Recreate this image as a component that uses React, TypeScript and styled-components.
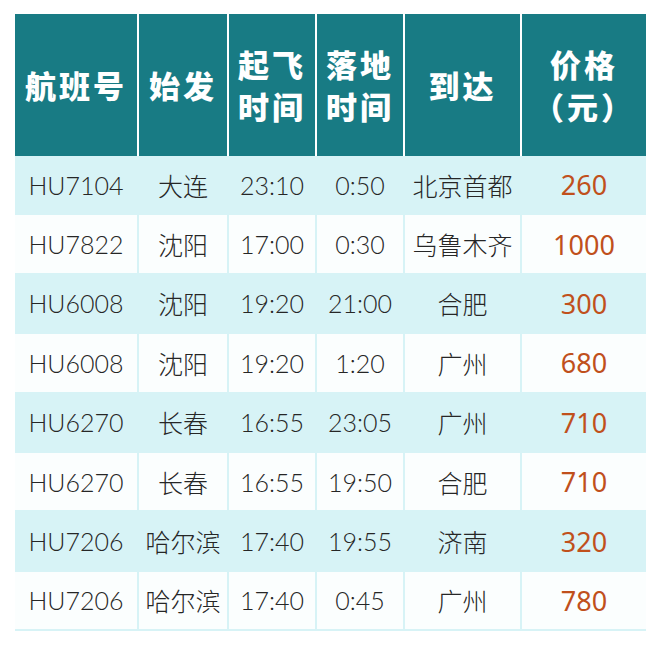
import React from 'react';
import styled, { createGlobalStyle, css } from 'styled-components';

const GlobalStyle = createGlobalStyle`
  html, body {
    margin: 0;
    padding: 0;
    background: #ffffff;
  }
`;

const Page = styled.div`
  width: 660px;
  height: 647px;
  padding: 14px 0 0 15px;
  box-sizing: border-box;
  background: #ffffff;
`;

const columns = '122px 88px 86px 86px 115px 124px';

const HeaderRow = styled.div`
  display: grid;
  grid-template-columns: ${columns};
  column-gap: 2px;
  width: 631px;
  height: 142px;
`;

const HeaderCell = styled.div`
  background: #187b84;
  color: #ffffff;
  display: flex;
  flex-direction: column;
  align-items: center;
  justify-content: center;
  gap: 0;
  font-family: 'Noto Sans CJK SC', sans-serif;
  font-weight: 900;
  font-size: 31px;
  line-height: 42px;
  letter-spacing: 3px;
  white-space: nowrap;
`;

const Body = styled.div`
  display: grid;
  grid-template-columns: ${columns};
  grid-auto-rows: 57.4px;
  gap: 2px;
  width: 631px;
  padding: 0 0 2px;
  box-sizing: border-box;
  background: #d7f3f6;
`;

type CellProps = { $shaded: boolean; $price?: boolean };

const Cell = styled.div<CellProps>`
  display: flex;
  align-items: center;
  justify-content: center;
  background: ${({ $shaded }) => ($shaded ? '#d7f3f6' : '#fbfefe')};
  color: #262626;
  font-family: 'Lato', 'Noto Sans CJK SC', sans-serif;
  font-weight: 300;
  font-size: 25px;
  white-space: nowrap;
  ${({ $price }) =>
    $price &&
    css`
      color: #c0501c;
      font-family: 'Noto Sans', 'Noto Sans CJK SC', sans-serif;
      font-weight: 400;
      font-size: 27px;
    `}
`;

const headers = [
  ['航班号'],
  ['始发'],
  ['起飞', '时间'],
  ['落地', '时间'],
  ['到达'],
  ['价格', '（元）'],
];

const flights = [
  ['HU7104', '大连', '23:10', '0:50', '北京首都', '260'],
  ['HU7822', '沈阳', '17:00', '0:30', '乌鲁木齐', '1000'],
  ['HU6008', '沈阳', '19:20', '21:00', '合肥', '300'],
  ['HU6008', '沈阳', '19:20', '1:20', '广州', '680'],
  ['HU6270', '长春', '16:55', '23:05', '广州', '710'],
  ['HU6270', '长春', '16:55', '19:50', '合肥', '710'],
  ['HU7206', '哈尔滨', '17:40', '19:55', '济南', '320'],
  ['HU7206', '哈尔滨', '17:40', '0:45', '广州', '780'],
];

export default function App() {
  return (
    <Page>
      <GlobalStyle />
      <HeaderRow>
        {headers.map((lines, i) => (
          <HeaderCell key={i}>
            {lines.map((l) => (
              <span key={l}>{l}</span>
            ))}
          </HeaderCell>
        ))}
      </HeaderRow>
      <Body>
        {flights.map((row, r) =>
          row.map((value, c) => (
            <Cell key={`${r}-${c}`} $shaded={r % 2 === 0} $price={c === 5}>
              {value}
            </Cell>
          ))
        )}
      </Body>
    </Page>
  );
}
